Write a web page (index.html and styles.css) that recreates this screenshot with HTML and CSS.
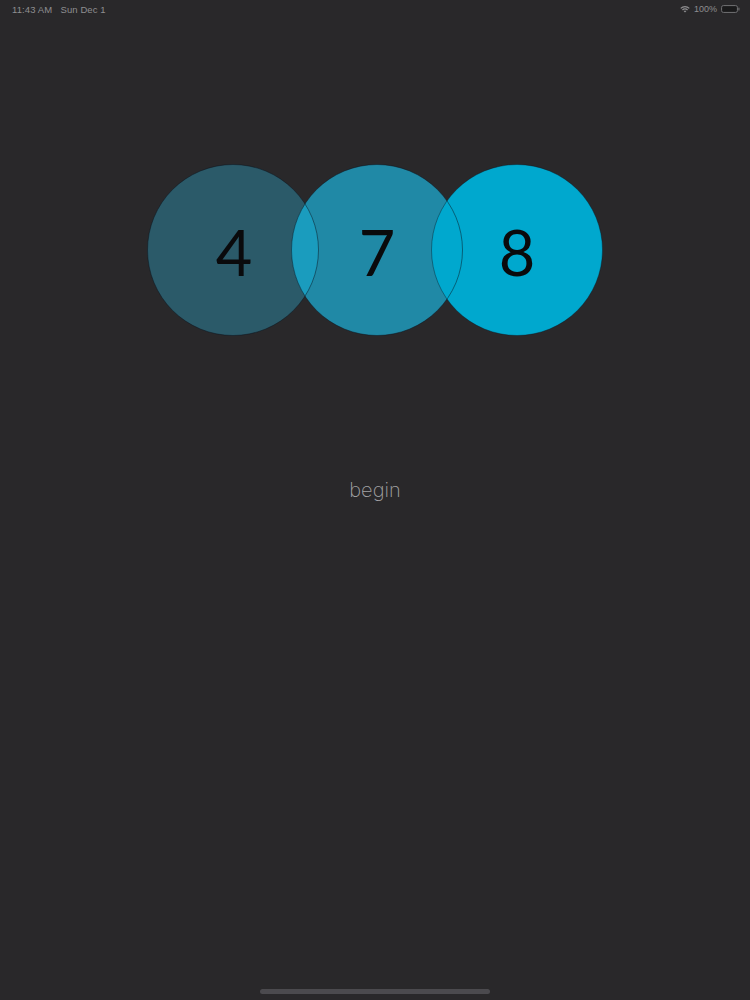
FILE: index.html
```html
<!DOCTYPE html>
<html>
<head>
<meta charset="utf-8">
<link rel="stylesheet" href="styles.css">
</head>
<body>
<div class="screen">
  <div class="status">
    <div class="status-left">11:43 AM&nbsp;&nbsp;&nbsp;Sun Dec 1</div>
    <div class="status-right">
      <svg class="wifi" width="10" height="8" viewBox="0 0 10 8">
        <path d="M0.3 2.9 A6.7 6.7 0 0 1 9.7 2.9 L8.8 3.8 A5.4 5.4 0 0 0 1.2 3.8 Z" fill="#8e8e90"/>
        <path d="M2.0 4.6 A4.2 4.2 0 0 1 8.0 4.6 L7.1 5.5 A2.9 2.9 0 0 0 2.9 5.5 Z" fill="#8e8e90"/>
        <path d="M3.7 6.3 A1.8 1.8 0 0 1 6.3 6.3 L5 7.6 Z" fill="#8e8e90"/>
      </svg>
      <span class="pct">100%</span>
      <svg class="battery" width="19" height="8" viewBox="0 0 19 8">
        <rect x="0.5" y="0.5" width="16" height="7" rx="2" fill="none" stroke="#6a6a6c" stroke-width="1"/>
        <rect x="1.5" y="1.5" width="14" height="5" rx="1.2" fill="#1a1a1b"/>
        <rect x="17.3" y="2.6" width="1.2" height="2.8" rx="0.5" fill="#6a6a6c"/>
      </svg>
    </div>
  </div>

  <div class="stage">
    <svg class="circles" width="460" height="175" viewBox="0 0 460 175">
      <defs>
        <clipPath id="c1"><circle cx="87" cy="88" r="85.5"/></clipPath>
      </defs>
      <circle cx="87" cy="88" r="85.5" fill="#2b5a69"/>
      <circle cx="231" cy="88" r="85.5" fill="#2089a6"/>
      <circle cx="231" cy="88" r="85.5" fill="#1a9cbe" clip-path="url(#c1)"/>
      <circle cx="371" cy="88" r="85.5" fill="#00a8ce"/>
      <circle cx="87" cy="88" r="85.5" fill="none" stroke="rgba(10,20,30,0.55)" stroke-width="0.9"/>
      <circle cx="231" cy="88" r="85.5" fill="none" stroke="rgba(10,20,30,0.55)" stroke-width="0.9"/>
      <circle cx="371" cy="88" r="85.5" fill="none" stroke="rgba(10,20,30,0.45)" stroke-width="0.9"/>
      <text class="digit" x="88" y="114" text-anchor="middle">4</text>
      <text class="digit" x="231" y="114" text-anchor="middle">7</text>
      <text class="digit" x="371" y="114" text-anchor="middle">8</text>
    </svg>
  </div>

  <div class="begin">begin</div>

  <div class="home-indicator"></div>
</div>
</body>
</html>
```

FILE: styles.css
```css
html, body {
  margin: 0;
  padding: 0;
  background: #29282a;
}

.screen {
  width: 750px;
  height: 1000px;
  display: flex;
  flex-direction: column;
  background: #29282a;
  font-family: "Liberation Sans", Arial, sans-serif;
}

.status {
  height: 18px;
  display: flex;
  justify-content: space-between;
  align-items: center;
  padding: 0 10px 0 12px;
  color: #8e8e90;
  font-size: 9.5px;
}

.status-left {
  letter-spacing: 0.1px;
}

.status-right {
  display: flex;
  align-items: center;
  gap: 4px;
}

.pct {
  font-size: 9px;
}

.stage {
  margin-top: 144px;
  padding-left: 2px;
  display: flex;
  justify-content: center;
}

.circles {
  display: block;
}

.digit {
  font-family: "Lato", "Open Sans", sans-serif;
  font-size: 63px;
  font-weight: 400;
  fill: #0a0a0c;
}

.begin {
  margin-top: 141px;
  text-align: center;
  font-family: "Inter", "Lato", sans-serif;
  font-weight: 200;
  font-size: 20px;
  line-height: 24px;
  color: #a3a3a5;
}

.home-indicator {
  margin: auto auto 6px;
  width: 230px;
  height: 5px;
  border-radius: 3px;
  background: #4b4a4e;
}
```
